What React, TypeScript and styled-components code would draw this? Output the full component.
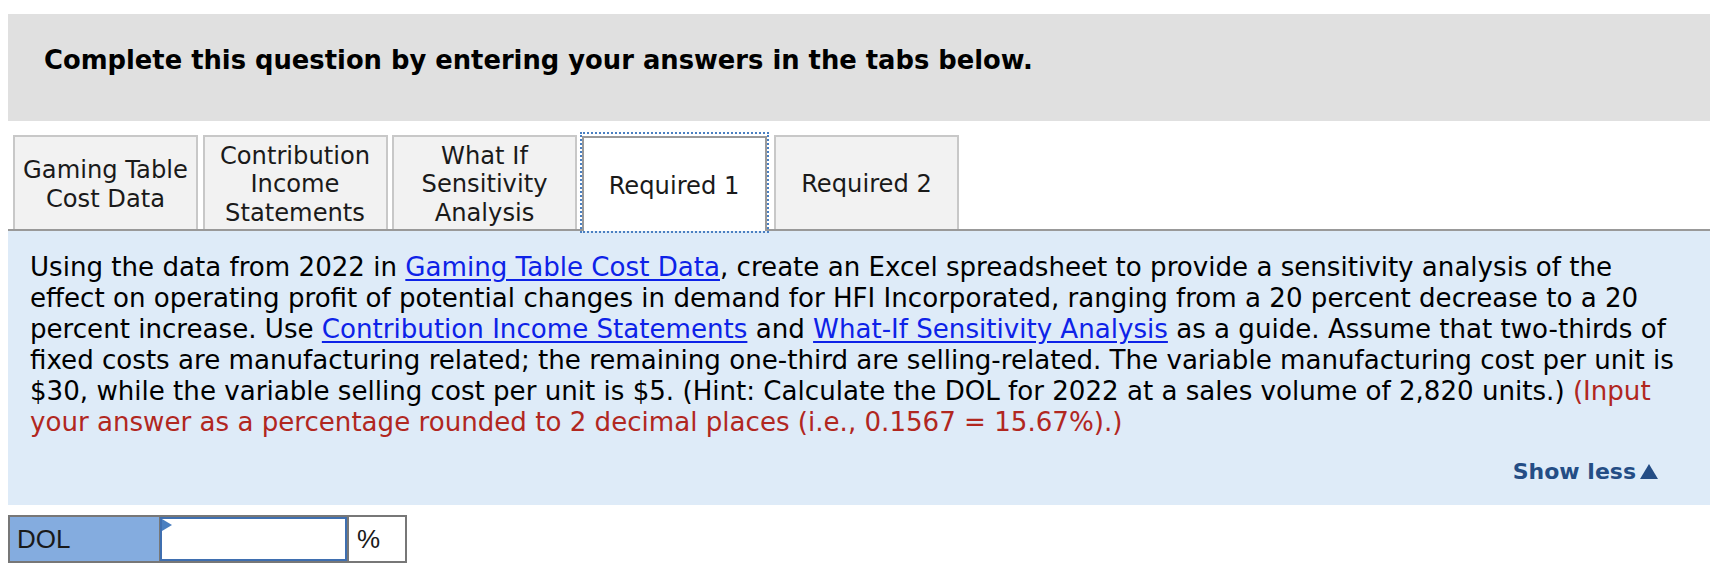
import React from 'react';
import styled, { createGlobalStyle } from 'styled-components';

const GlobalStyle = createGlobalStyle`
  body {
    margin: 0;
    background: #ffffff;
    font-family: "DejaVu Sans", Verdana, sans-serif;
    color: #000000;
  }
`;

const Page = styled.div`
  padding: 14px 14px 0 8px;
`;

const Instructions = styled.div`
  height: 107px;
  box-sizing: border-box;
  background: #e0e0e0;
  padding: 31px 0 0 36px;
  font-weight: bold;
  font-size: 25.8px;
  line-height: 1.164;
`;

const TabBar = styled.div`
  display: flex;
  align-items: flex-end;
  gap: 4.5px;
  margin-top: 14px;
  padding-left: 5px;
`;

const Tab = styled.div<{ $active?: boolean }>`
  position: relative;
  width: 185px;
  height: ${(p) => (p.$active ? '95px' : '94px')};
  box-sizing: border-box;
  display: flex;
  align-items: center;
  justify-content: center;
  padding-top: 3px;
  text-align: center;
  font-size: 24.2px;
  line-height: 28.6px;
  color: #1a1a1a;
  background: ${(p) => (p.$active ? '#ffffff' : '#f2f2f2')};
  border: 2px solid ${(p) => (p.$active ? '#9a9a9a' : '#c8c8c8')};
  border-bottom: none;
  margin: ${(p) => (p.$active ? '0 3px -2px 0' : '0')};
  z-index: ${(p) => (p.$active ? 1 : 0)};

  ${(p) =>
    p.$active &&
    `
    &::after {
      content: '';
      position: absolute;
      top: -6px;
      left: -4px;
      right: -4px;
      bottom: -2px;
      border: 2px dotted #4a7fc1;
    }
  `}
`;

const Panel = styled.div`
  background: #deebf8;
  border-top: 2px solid #999999;
  padding: 21px 52px 20px 22px;
`;

const Prompt = styled.p`
  margin: 0;
  font-size: 26.1px;
  line-height: 31px;
  white-space: nowrap;
`;

const DocLink = styled.a`
  color: #0d22e8;
  text-decoration: underline;
  text-underline-offset: 3px;
`;

const Hint = styled.span`
  color: #b1271f;
`;

const ShowLess = styled.div`
  margin-top: 21px;
  text-align: right;
  font-weight: bold;
  font-size: 22px;
  line-height: 26px;
  color: #244d85;
`;

const Caret = styled.span`
  display: inline-block;
  margin-left: 4px;
  width: 0;
  height: 0;
  border-left: 9.5px solid transparent;
  border-right: 9.5px solid transparent;
  border-bottom: 15px solid #244d85;
`;

const AnswerRow = styled.div`
  display: inline-flex;
  margin-top: 10px;
  height: 48px;
  box-sizing: border-box;
  border: 2px solid #777777;
  font-family: "Liberation Sans", Arial, sans-serif;
  font-size: 26px;
`;

const LabelCell = styled.div`
  width: 150px;
  box-sizing: border-box;
  display: flex;
  align-items: center;
  padding-left: 7px;
  background: #84acdf;
  color: #1a1a1a;
  border-right: 1px solid #777777;
`;

const InputCell = styled.div`
  position: relative;
  width: 187px;
  box-sizing: border-box;
  background: #ffffff;
  border: 2px solid #3f6fb0;
`;

const Marker = styled.span`
  position: absolute;
  top: 0;
  left: 0;
  width: 0;
  height: 0;
  border-top: 6.5px solid transparent;
  border-bottom: 6.5px solid transparent;
  border-left: 10px solid #4a7fc0;
`;

const UnitCell = styled.div`
  width: 58px;
  box-sizing: border-box;
  display: flex;
  align-items: center;
  padding-left: 8px;
  background: #ffffff;
  color: #1a1a1a;
  border-left: 2px solid #777777;
`;

export default function App() {
  return (
    <Page>
      <GlobalStyle />
      <Instructions>Complete this question by entering your answers in the tabs below.</Instructions>
      <TabBar>
        <Tab>Gaming Table<br />Cost Data</Tab>
        <Tab>Contribution<br />Income<br />Statements</Tab>
        <Tab>What If<br />Sensitivity<br />Analysis</Tab>
        <Tab $active>Required 1</Tab>
        <Tab>Required 2</Tab>
      </TabBar>
      <Panel>
        <Prompt>
          Using the data from 2022 in <DocLink>Gaming Table Cost Data</DocLink>, create an Excel spreadsheet to provide a sensitivity analysis of the<br />
          effect on operating profit of potential changes in demand for HFI Incorporated, ranging from a 20 percent decrease to a 20<br />
          percent increase. Use <DocLink>Contribution Income Statements</DocLink> and <DocLink>What-If Sensitivity Analysis</DocLink> as a guide. Assume that two-thirds of<br />
          fixed costs are manufacturing related; the remaining one-third are selling-related. The variable manufacturing cost per unit is<br />
          $30, while the variable selling cost per unit is $5. (Hint: Calculate the DOL for 2022 at a sales volume of 2,820 units.) <Hint>(Input<br />
          your answer as a percentage rounded to 2 decimal places (i.e., 0.1567 = 15.67%).)</Hint>
        </Prompt>
        <ShowLess>
          Show less<Caret />
        </ShowLess>
      </Panel>
      <AnswerRow>
        <LabelCell>DOL</LabelCell>
        <InputCell>
          <Marker />
        </InputCell>
        <UnitCell>%</UnitCell>
      </AnswerRow>
    </Page>
  );
}
